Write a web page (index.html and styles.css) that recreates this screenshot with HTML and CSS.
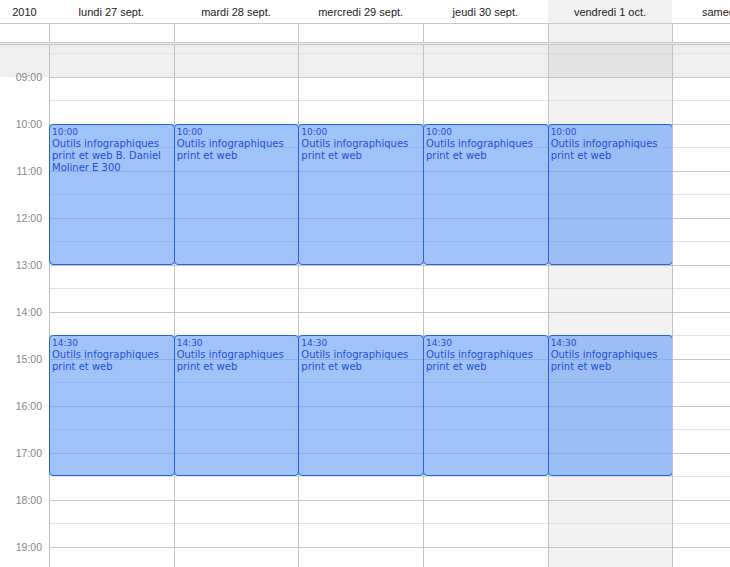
FILE: index.html
```html
<!DOCTYPE html>
<html lang="fr">
<head>
<meta charset="utf-8">
<title>Calendrier – semaine</title>
<link rel="stylesheet" href="styles.css">
</head>
<body>
<div class="cal">
  <div class="head">
    <div class="hcell year">2010</div>
    <div class="hcell">lundi 27 sept.</div>
    <div class="hcell">mardi 28 sept.</div>
    <div class="hcell">mercredi 29 sept.</div>
    <div class="hcell">jeudi 30 sept.</div>
    <div class="hcell today">vendredi 1 oct.</div>
    <div class="hcell">samedi 2 oct.</div>
    <div class="hcell">dimanche 3 oct.</div>
  </div>
  <div class="allday">
    <div class="acell first"></div>
    <div class="acell"></div>
    <div class="acell"></div>
    <div class="acell"></div>
    <div class="acell"></div>
    <div class="acell today"></div>
    <div class="acell"></div>
    <div class="acell"></div>
  </div>
  <div class="sep"></div>
  <div class="grid">
    <div class="times">
      <div class="t"><span>09:00</span></div>
      <div class="t"><span>10:00</span></div>
      <div class="t"><span>11:00</span></div>
      <div class="t"><span>12:00</span></div>
      <div class="t"><span>13:00</span></div>
      <div class="t"><span>14:00</span></div>
      <div class="t"><span>15:00</span></div>
      <div class="t"><span>16:00</span></div>
      <div class="t"><span>17:00</span></div>
      <div class="t"><span>18:00</span></div>
      <div class="t"><span>19:00</span></div>
    </div>
    <div class="day">
      <div class="event ev-am"><div class="ev-time">10:00</div><div class="ev-title">Outils infographiques print et web B. Daniel Moliner E 300</div></div>
      <div class="event ev-pm"><div class="ev-time">14:30</div><div class="ev-title">Outils infographiques print et web</div></div>
    </div>
    <div class="day">
      <div class="event ev-am"><div class="ev-time">10:00</div><div class="ev-title">Outils infographiques print et web</div></div>
      <div class="event ev-pm"><div class="ev-time">14:30</div><div class="ev-title">Outils infographiques print et web</div></div>
    </div>
    <div class="day">
      <div class="event ev-am"><div class="ev-time">10:00</div><div class="ev-title">Outils infographiques print et web</div></div>
      <div class="event ev-pm"><div class="ev-time">14:30</div><div class="ev-title">Outils infographiques print et web</div></div>
    </div>
    <div class="day">
      <div class="event ev-am"><div class="ev-time">10:00</div><div class="ev-title">Outils infographiques print et web</div></div>
      <div class="event ev-pm"><div class="ev-time">14:30</div><div class="ev-title">Outils infographiques print et web</div></div>
    </div>
    <div class="day today">
      <div class="event ev-am"><div class="ev-time">10:00</div><div class="ev-title">Outils infographiques print et web</div></div>
      <div class="event ev-pm"><div class="ev-time">14:30</div><div class="ev-title">Outils infographiques print et web</div></div>
    </div>
    <div class="day"></div>
    <div class="day"></div>
  </div>
</div>
</body>
</html>
```
FILE: styles.css
```css
html, body {
  margin: 0;
  padding: 0;
  background: #fff;
  overflow: hidden;
}

.cal {
  width: 730px;
  height: 567px;
  overflow: hidden;
  font-family: "Liberation Sans", Arial, sans-serif;
}

.head,
.allday,
.grid {
  display: grid;
  grid-template-columns: 49px repeat(7, 124.67px);
  width: max-content;
}

.head {
  height: 23px;
  border-bottom: 1px solid #c9c9c9;
}

.hcell {
  font-size: 11px;
  line-height: 22px;
  padding-top: 1px;
  color: #1c1c1c;
  text-align: center;
  white-space: nowrap;
}

.hcell.today {
  background: #f2f2f2;
}

.allday {
  height: 18px;
}

.acell {
  border-left: 1px solid #c4c4c4;
  box-sizing: border-box;
}

.acell.first {
  border-left: 0;
}

.acell.today {
  background: #f2f2f2;
}

.sep {
  height: 1px;
  background: #ebebeb;
  border-top: 1px solid #c6c6c6;
  border-bottom: 1px solid #c6c6c6;
  width: 922px;
}

.grid {
  height: 522px;
  overflow: hidden;
}

.times {
  display: flex;
  flex-direction: column;
  padding-top: 32px;
  background: linear-gradient(#efefef, #efefef) 0 0 / 100% 32px no-repeat;
}

.t {
  display: flow-root;
  flex: 0 0 47px;
  height: 47px;
}

.t span {
  display: block;
  margin-top: -7px;
  height: 14px;
  line-height: 14px;
  padding-right: 7px;
  text-align: right;
  font-size: 10.5px;
  color: #878787;
}

.day {
  position: relative;
  box-sizing: border-box;
  border-left: 1px solid #c2c2c2;
  background:
    linear-gradient(to bottom, #c7c7c7 1px, transparent 1px) 0 32px / 100% 47px repeat-y,
    linear-gradient(to bottom, #e2e2e2 1px, transparent 1px) 0 55px / 100% 47px repeat-y,
    linear-gradient(#efefef, #efefef) 0 0 / 100% 32px no-repeat,
    #ffffff;
}

.day.today {
  background:
    linear-gradient(to bottom, #c2c2c2 1px, transparent 1px) 0 32px / 100% 47px repeat-y,
    linear-gradient(to bottom, #dadada 1px, transparent 1px) 0 55px / 100% 47px repeat-y,
    linear-gradient(#e4e4e4, #e4e4e4) 0 0 / 100% 32px no-repeat,
    #f2f2f2;
}

.event {
  position: absolute;
  left: -1px;
  right: -1px;
  box-sizing: border-box;
  height: 141px;
  border: 1px solid #2262e4;
  border-radius: 4px;
  background: rgba(102, 158, 247, 0.62);
  padding: 1px 2px 0 2px;
  overflow: hidden;
  font-family: "DejaVu Sans", Verdana, sans-serif;
  color: #1e4fd3;
}

.ev-am {
  top: 79px;
}

.ev-pm {
  top: 290px;
}

.ev-time {
  font-size: 9px;
  line-height: 12px;
}

.ev-title {
  font-size: 10px;
  line-height: 12px;
}
```
